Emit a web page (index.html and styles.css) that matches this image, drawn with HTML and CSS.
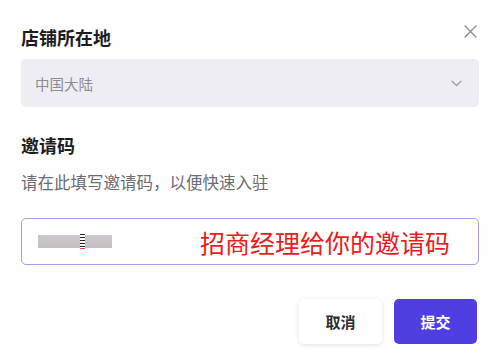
FILE: index.html
```html
<!DOCTYPE html>
<html lang="zh-CN">
<head>
<meta charset="utf-8">
<title>店铺所在地</title>
<link rel="stylesheet" href="styles.css">
</head>
<body>
<div class="dialog">
  <div class="header">
    <h2 class="title">店铺所在地</h2>
    <button class="close" aria-label="关闭">
      <svg width="13" height="13" viewBox="0 0 13 13"><path d="M1 1L12 12M12 1L1 12" stroke="#8a8a8a" stroke-width="1.3" fill="none" stroke-linecap="round"/></svg>
    </button>
  </div>
  <div class="select">
    <span class="select-value">中国大陆</span>
    <svg class="chevron" width="11" height="7" viewBox="0 0 11 7"><path d="M1 1.2L5.5 5.5L10 1.2" stroke="#9a9aa2" stroke-width="1.2" fill="none" stroke-linecap="round" stroke-linejoin="round"/></svg>
  </div>
  <h2 class="section-title">邀请码</h2>
  <p class="hint">请在此填写邀请码，以便快速入驻</p>
  <div class="input">
    <span class="redacted"><span class="cursor"></span></span>
    <span class="note">招商经理给你的邀请码</span>
  </div>
  <div class="actions">
    <button class="btn btn-cancel">取消</button>
    <button class="btn btn-primary">提交</button>
  </div>
</div>
</body>
</html>
```

FILE: styles.css
```css
* { box-sizing: border-box; }
html, body { margin: 0; padding: 0; background: #ffffff; }
body {
  font-family: "Noto Sans CJK SC", "Noto Sans", sans-serif;
  width: 500px;
  height: 363px;
  overflow: hidden;
}
.dialog {
  padding: 19px 21px 0 21px;
  display: flex;
  flex-direction: column;
}
.header {
  display: flex;
  justify-content: space-between;
  align-items: flex-start;
}
.title {
  margin: 6px 0 0 0;
  font-size: 18px;
  line-height: 24px;
  font-weight: 700;
  color: #1d1d1f;
}
.close {
  width: 24px;
  height: 24px;
  margin-right: -3px;
  padding: 0;
  border: none;
  background: transparent;
  display: flex;
  align-items: center;
  justify-content: center;
}
.select {
  margin-top: 10px;
  height: 48px;
  background: #eeedf3;
  border-radius: 5px;
  display: flex;
  align-items: center;
  justify-content: space-between;
  padding: 0 17px 0 14px;
}
.select-value {
  font-size: 14.5px;
  color: #8c8c94;
}
.chevron { display: block; }
.section-title {
  margin: 26px 0 0 0;
  font-size: 18px;
  line-height: 24px;
  font-weight: 700;
  color: #1d1d1f;
}
.hint {
  margin: 13px 0 0 0;
  font-size: 16.5px;
  line-height: 24px;
  color: #6b6b70;
}
.input {
  margin-top: 24px;
  height: 47px;
  border: 1px solid #a79df0;
  border-radius: 5px;
  display: flex;
  align-items: center;
  padding-left: 16px;
}
.redacted {
  position: relative;
  width: 74px;
  height: 13px;
  background: linear-gradient(#cdc8cd, #c4bec4);
  filter: blur(0.4px);
}
.cursor {
  position: absolute;
  left: 42px;
  top: -1px;
  width: 5px;
  height: 15px;
  background: repeating-linear-gradient(#222 0 1.5px, #fff 1.5px 3px);
  border-bottom: 1px solid #f04050;
}
.note {
  margin-left: 88px;
  font-size: 25px;
  line-height: 30px;
  color: #f01a22;
}
.actions {
  margin-top: 34px;
  display: flex;
  justify-content: flex-end;
  gap: 12px;
  padding-right: 2px;
}
.btn {
  width: 83px;
  height: 45px;
  border-radius: 5px;
  font-family: "Noto Sans CJK SC", "Noto Sans", sans-serif;
  font-size: 15px;
  font-weight: 700;
  border: none;
}
.btn-cancel {
  background: #ffffff;
  color: #2f2f33;
  box-shadow: 0 1px 5px rgba(0, 0, 0, 0.12);
}
.btn-primary {
  background: #4f3ee2;
  color: #ffffff;
}
```
